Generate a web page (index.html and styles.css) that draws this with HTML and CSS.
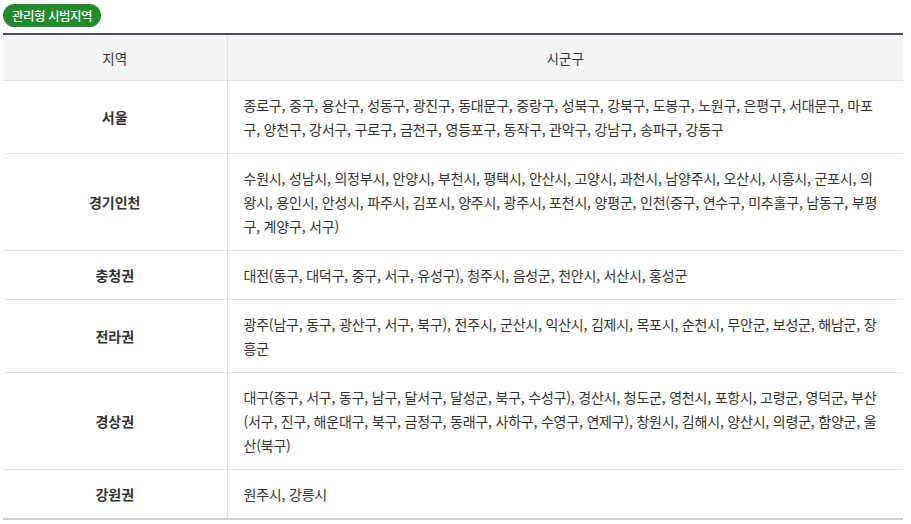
FILE: index.html
```html
<!DOCTYPE html>
<html lang="ko">
<head>
<meta charset="utf-8">
<link rel="stylesheet" href="styles.css">
</head>
<body>
<div class="page">
  <div class="badge-row"><span class="badge">관리형 시범지역</span></div>
  <table class="region-table">
    <colgroup><col class="col-region"><col class="col-district"></colgroup>
    <thead>
      <tr><th>지역</th><th>시군구</th></tr>
    </thead>
    <tbody>
      <tr><th>서울</th><td>종로구, 중구, 용산구, 성동구, 광진구, 동대문구, 중랑구, 성북구, 강북구, 도봉구, 노원구, 은평구, 서대문구, 마포구, 양천구, 강서구, 구로구, 금천구, 영등포구, 동작구, 관악구, 강남구, 송파구, 강동구</td></tr>
      <tr><th>경기인천</th><td>수원시, 성남시, 의정부시, 안양시, 부천시, 평택시, 안산시, 고양시, 과천시, 남양주시, 오산시, 시흥시, 군포시, 의왕시, 용인시, 안성시, 파주시, 김포시, 양주시, 광주시, 포천시, 양평군, 인천(중구, 연수구, 미추홀구, 남동구, 부평구, 계양구, 서구)</td></tr>
      <tr><th>충청권</th><td>대전(동구, 대덕구, 중구, 서구, 유성구), 청주시, 음성군, 천안시, 서산시, 홍성군</td></tr>
      <tr><th>전라권</th><td>광주(남구, 동구, 광산구, 서구, 북구), 전주시, 군산시, 익산시, 김제시, 목포시, 순천시, 무안군, 보성군, 해남군, 장흥군</td></tr>
      <tr><th>경상권</th><td>대구(중구, 서구, 동구, 남구, 달서구, 달성군, 북구, 수성구), 경산시, 청도군, 영천시, 포항시, 고령군, 영덕군, 부산(서구, 진구, 해운대구, 북구, 금정구, 동래구, 사하구, 수영구, 연제구), 창원시, 김해시, 양산시, 의령군, 함양군, 울산(북구)</td></tr>
      <tr><th>강원권</th><td>원주시, 강릉시</td></tr>
    </tbody>
  </table>
</div>
</body>
</html>
```

FILE: styles.css
```css
html, body {
  margin: 0;
  padding: 0;
  background: #fff;
}
body {
  font-family: "Noto Sans CJK KR", "Noto Sans", sans-serif;
  color: #333;
}
.page {
  padding: 4px 8px 0 3px;
}
.badge-row {
  display: flex;
  height: 23px;
}
.badge {
  display: block;
  background: #238a2b;
  color: #fff;
  font-size: 12.5px;
  font-weight: 500;
  line-height: 23px;
  height: 23px;
  padding: 0 9px;
  border-radius: 12px;
  letter-spacing: -0.5px;
}
.region-table {
  width: 900px;
  margin-top: 6px;
  border-collapse: collapse;
  border-top: 2px solid #4b4b5e;
  border-bottom: 2px solid #cfcfd6;
  font-size: 14px;
  table-layout: fixed;
}
.col-region { width: 224px; }
.region-table thead th {
  background: #f5f5f5;
  font-size: 13.5px;
  font-weight: 400;
  height: 45px;
  padding: 0;
  text-align: center;
  border-bottom: 1px solid #e2e2e6;
}
.region-table tbody th {
  font-weight: 700;
  text-align: center;
  padding: 0;
}
.region-table th + th,
.region-table td {
  border-left: 1px solid #e2e2e6;
}
.region-table tbody tr {
  border-bottom: 1px solid #e2e2e6;
}
.region-table tbody tr:last-child {
  border-bottom: none;
}
.region-table td {
  padding: 12px 22px 12px 16px;
  line-height: 24px;
  text-align: left;
  letter-spacing: -0.2px;
}
```
